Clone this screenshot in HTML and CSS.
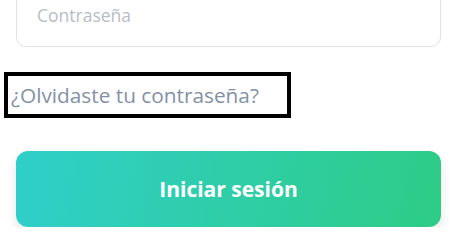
FILE: index.html
```html
<!DOCTYPE html>
<html lang="es">
<head>
    <meta charset="UTF-8">
    <meta name="viewport" content="width=device-width, initial-scale=1.0">
    <title>Iniciar sesión</title>
    <link rel="stylesheet" href="styles.css">
</head>
<body>
    <main class="login">
        <div class="form-group">
            <input type="password" id="clave" name="clave" placeholder="Contraseña">
        </div>
        <a href="#" class="forgot">¿Olvidaste tu contraseña?</a>
        <button class="submit">Iniciar sesión</button>
    </main>
</body>
</html>
```

FILE: styles.css
```css
body {
    font-family: 'Open Sans', 'Noto Sans', sans-serif;
    background: #fff;
    margin: 0;
    color: #333;
}

.login {
    width: 425px;
    padding: 0 20px 0 16px;
    display: flex;
    flex-direction: column;
    align-items: flex-start;
}

.form-group {
    width: 100%;
    margin-top: -17px;
}

input {
    width: 100%;
    height: 64px;
    padding: 0 20px;
    border: 1px solid #dfe2e7;
    border-radius: 10px;
    box-sizing: border-box;
    font-family: inherit;
    font-size: 17.5px;
    color: #333;
    background: #fff;
}

input::placeholder {
    color: #b7bdc6;
}

.forgot {
    width: 276px;
    margin: 25px 0 33px -12px;
    padding: 4px 0 4px 3px;
    border: 4px solid #000;
    font-size: 20.8px;
    line-height: 30px;
    color: #8391a7;
    text-decoration: none;
    white-space: nowrap;
}

button.submit {
    width: 100%;
    height: 76px;
    border: none;
    border-radius: 12px;
    background: linear-gradient(100deg, #2fcfca, #2ecc86);
    box-shadow: 0 6px 12px rgba(0, 0, 0, 0.1);
    color: #fff;
    font-family: inherit;
    font-size: 21px;
    font-weight: 700;
    cursor: pointer;
}
```
